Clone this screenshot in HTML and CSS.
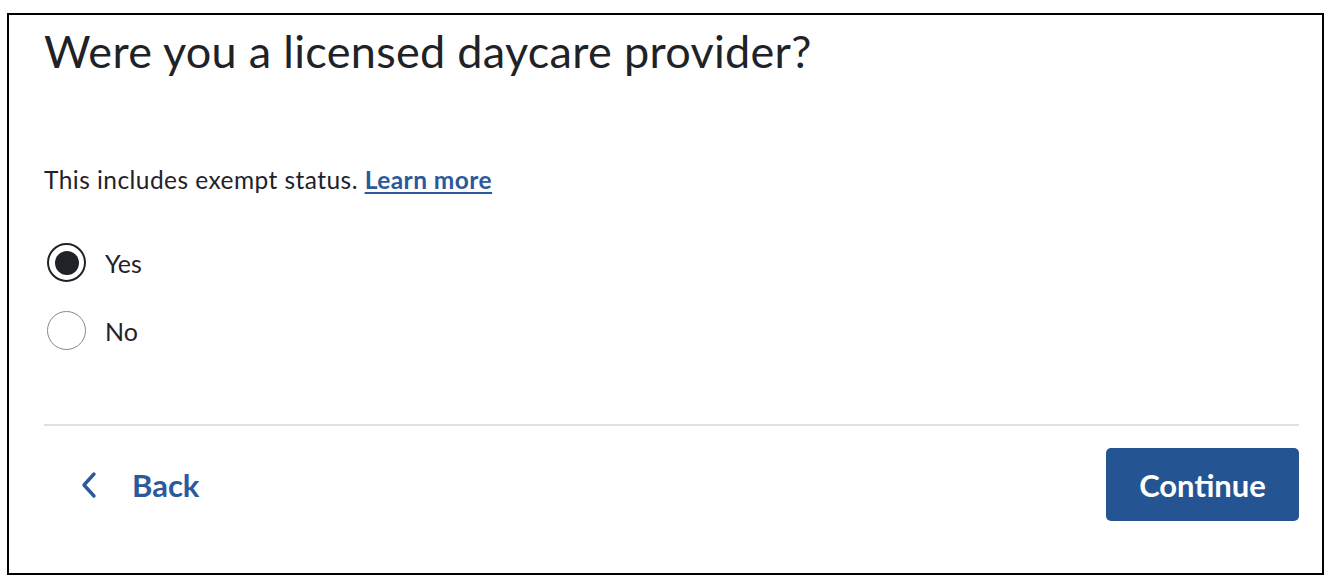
FILE: index.html
```html
<!DOCTYPE html>
<html lang="en">
<head>
<meta charset="utf-8">
<title>Licensed daycare provider</title>
<link rel="stylesheet" href="styles.css">
</head>
<body>
<div class="card">
  <h1 class="title">Were you a licensed daycare provider?</h1>
  <p class="hint">This includes exempt status. <a class="link" href="#">Learn more</a></p>
  <div class="options">
    <label class="option">
      <span class="radio checked"><span class="dot"></span></span>
      <span class="opt-label">Yes</span>
    </label>
    <label class="option">
      <span class="radio"></span>
      <span class="opt-label">No</span>
    </label>
  </div>
  <div class="divider"></div>
  <div class="footer">
    <a class="back" href="#">
      <svg class="chev" width="18" height="28" viewBox="0 0 18 28" aria-hidden="true"><path d="M14 3 L4 14 L14 25" fill="none" stroke="#2a5a9c" stroke-width="3.4" stroke-linecap="round" stroke-linejoin="round"/></svg>
      <span>Back</span>
    </a>
    <button class="continue" type="button">Continue</button>
  </div>
</div>
</body>
</html>
```
FILE: styles.css
```css
html, body {
  margin: 0;
  padding: 0;
  background: #ffffff;
}
body {
  font-family: "Lato", "Noto Sans", sans-serif;
  color: #1f2328;
}
.card {
  margin: 13px 0 0 7px;
  width: 1317px;
  height: 562px;
  box-sizing: border-box;
  border: 2px solid #000;
  padding: 0 23px 0 35px;
  display: flex;
  flex-direction: column;
}
.title {
  margin: 10px 0 0 0;
  font-weight: 400;
  font-size: 45px;
  line-height: 52px;
  color: #1f2328;
  letter-spacing: 0.3px;
}
.hint {
  margin: 88px 0 0 0;
  font-size: 24.5px;
  line-height: 30px;
  letter-spacing: 0.45px;
}
.link {
  color: #2a5a9c;
  font-weight: 700;
  text-decoration: underline;
  text-underline-offset: 3px;
  text-decoration-thickness: 2px;
}
.options {
  margin-top: 48px;
  display: flex;
  flex-direction: column;
  gap: 29px;
}
.option {
  display: flex;
  align-items: center;
  gap: 19px;
  font-size: 25px;
}
.radio {
  width: 39px;
  height: 39px;
  box-sizing: border-box;
  border-radius: 50%;
  border: 1.5px solid #7d8a95;
  display: flex;
  align-items: center;
  justify-content: center;
  margin-left: 3px;
}
.radio.checked {
  border: 2.5px solid #1f2328;
}
.dot {
  width: 24px;
  height: 24px;
  border-radius: 50%;
  background: #1f2328;
}
.divider {
  margin-top: 74px;
  height: 2px;
  background: #dbe2e7;
}
.footer {
  display: flex;
  justify-content: space-between;
  align-items: center;
  margin-top: 22px;
}
.back {
  display: flex;
  align-items: center;
  gap: 34px;
  padding-left: 36px;
  color: #2a5a9c;
  font-weight: 700;
  font-size: 31px;
  text-decoration: none;
}
.chev {
  display: block;
}
.continue {
  width: 193px;
  height: 73px;
  border: none;
  border-radius: 5px;
  background: #245592;
  color: #ffffff;
  font-family: "Lato", "Noto Sans", sans-serif;
  font-weight: 700;
  font-size: 31px;
}
```
